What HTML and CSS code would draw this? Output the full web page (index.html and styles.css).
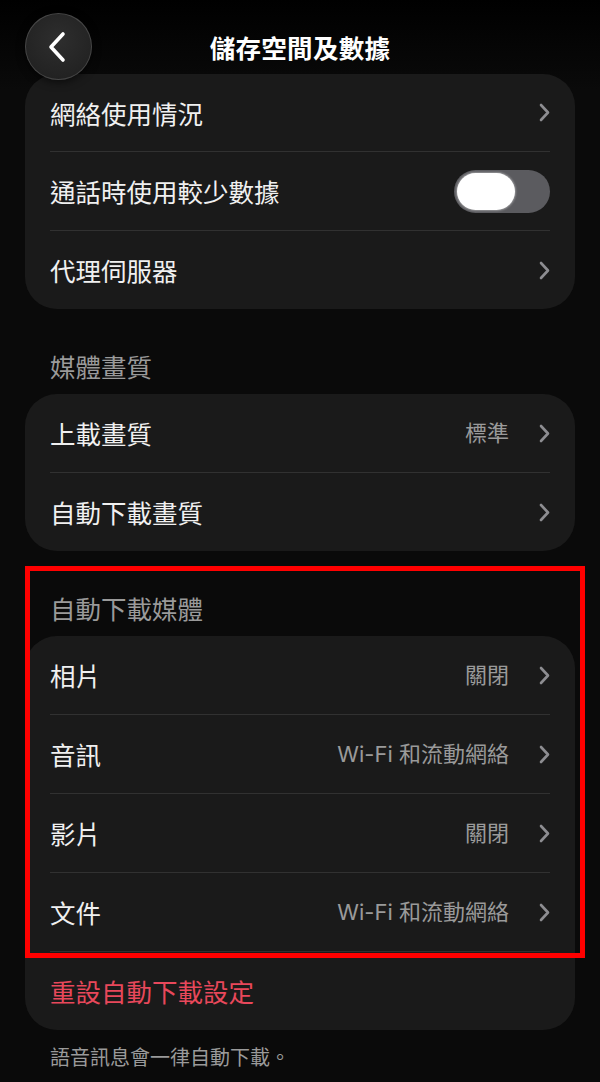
FILE: index.html
```html
<!DOCTYPE html>
<html lang="zh-Hant">
<head>
<meta charset="utf-8">
<title>儲存空間及數據</title>
<link rel="stylesheet" href="styles.css">
</head>
<body>
<div class="screen">
  <header class="topbar">
    <button class="back" aria-label="返回">
      <svg width="20" height="32" viewBox="0 0 20 32"><path d="M16 3 L4 16 L16 29" fill="none" stroke="#ffffff" stroke-width="3.6" stroke-linecap="round" stroke-linejoin="round"/></svg>
    </button>
    <h1 class="title">儲存空間及數據</h1>
    <div class="spacer"></div>
  </header>

  <section class="card first">
    <div class="row"><span class="label">網絡使用情況</span><span class="chev"><svg width="11" height="19" viewBox="0 0 11 19"><path d="M2 2 L9 9.5 L2 17" fill="none" stroke="#8d8d91" stroke-width="2.6" stroke-linecap="round" stroke-linejoin="round"/></svg></span></div>
    <div class="row"><span class="label">通話時使用較少數據</span><span class="toggle"><span class="knob"></span></span></div>
    <div class="row last"><span class="label">代理伺服器</span><span class="chev"><svg width="11" height="19" viewBox="0 0 11 19"><path d="M2 2 L9 9.5 L2 17" fill="none" stroke="#8d8d91" stroke-width="2.6" stroke-linecap="round" stroke-linejoin="round"/></svg></span></div>
  </section>

  <h2 class="section-title">媒體畫質</h2>
  <section class="card">
    <div class="row"><span class="label">上載畫質</span><span class="value">標準</span><span class="chev"><svg width="11" height="19" viewBox="0 0 11 19"><path d="M2 2 L9 9.5 L2 17" fill="none" stroke="#8d8d91" stroke-width="2.6" stroke-linecap="round" stroke-linejoin="round"/></svg></span></div>
    <div class="row last"><span class="label">自動下載畫質</span><span class="chev"><svg width="11" height="19" viewBox="0 0 11 19"><path d="M2 2 L9 9.5 L2 17" fill="none" stroke="#8d8d91" stroke-width="2.6" stroke-linecap="round" stroke-linejoin="round"/></svg></span></div>
  </section>

  <div class="highlight-wrap">
    <div class="highlight"></div>
    <h2 class="section-title">自動下載媒體</h2>
    <section class="card">
      <div class="row"><span class="label">相片</span><span class="value">關閉</span><span class="chev"><svg width="11" height="19" viewBox="0 0 11 19"><path d="M2 2 L9 9.5 L2 17" fill="none" stroke="#8d8d91" stroke-width="2.6" stroke-linecap="round" stroke-linejoin="round"/></svg></span></div>
      <div class="row"><span class="label">音訊</span><span class="value">Wi-Fi 和流動網絡</span><span class="chev"><svg width="11" height="19" viewBox="0 0 11 19"><path d="M2 2 L9 9.5 L2 17" fill="none" stroke="#8d8d91" stroke-width="2.6" stroke-linecap="round" stroke-linejoin="round"/></svg></span></div>
      <div class="row"><span class="label">影片</span><span class="value">關閉</span><span class="chev"><svg width="11" height="19" viewBox="0 0 11 19"><path d="M2 2 L9 9.5 L2 17" fill="none" stroke="#8d8d91" stroke-width="2.6" stroke-linecap="round" stroke-linejoin="round"/></svg></span></div>
      <div class="row"><span class="label">文件</span><span class="value">Wi-Fi 和流動網絡</span><span class="chev"><svg width="11" height="19" viewBox="0 0 11 19"><path d="M2 2 L9 9.5 L2 17" fill="none" stroke="#8d8d91" stroke-width="2.6" stroke-linecap="round" stroke-linejoin="round"/></svg></span></div>
      <div class="row last"><span class="label danger">重設自動下載設定</span></div>
    </section>
  </div>

  <p class="footnote">語音訊息會一律自動下載。</p>
</div>
</body>
</html>
```

FILE: styles.css
```css
* { box-sizing: border-box; }

html, body {
  margin: 0;
  padding: 0;
  background: #0a0a0a;
}

body {
  font-family: "Noto Sans CJK TC", "Noto Sans", sans-serif;
  color: #f2f2f2;
  width: 600px;
  height: 1082px;
  overflow: hidden;
}

.screen {
  background: linear-gradient(#000000 0px, #0a0a0a 90px, #0a0a0a 100%);
  min-height: 1082px;
}

.topbar {
  height: 74px;
  padding: 13px 25px 0 25px;
  display: grid;
  grid-template-columns: 67px 1fr 67px;
  align-items: start;
}

.back {
  position: relative;
  z-index: 2;
  width: 67px;
  height: 67px;
  border-radius: 50%;
  border: 1.5px solid rgba(255, 255, 255, 0.16);
  background: radial-gradient(circle at 50% 40%, #2e2e2e 0%, #232323 70%, #1c1c1c 100%);
  box-shadow: 0 2px 8px rgba(0, 0, 0, 0.6);
  display: flex;
  align-items: center;
  justify-content: center;
  padding: 0 3px 0 0;
}

.back svg { display: block; }

.title {
  margin: 0;
  text-align: center;
  font-size: 25.5px;
  font-weight: 700;
  line-height: 67px;
  color: #ffffff;
  letter-spacing: 0.3px;
}

.card {
  margin: 0 25px;
  background: #1a1a1a;
  border-radius: 32px;
}

.row {
  margin: 0 25px;
  height: 79px;
  display: flex;
  align-items: center;
  border-bottom: 1px solid #313131;
}

.row.last {
  height: 78px;
  border-bottom: none;
}

.first .row:first-child { height: 78px; }

.label {
  flex: 1;
  font-size: 25.5px;
  line-height: 1;
  color: #f0f0f0;
}

.label.danger {
  color: #e8485b;
}

.value {
  font-family: "Inter", "Noto Sans CJK TC", sans-serif;
  font-size: 22px;
  line-height: 1;
  color: #9a9a9a;
  margin-right: 30px;
}

.chev {
  width: 11px;
  height: 19px;
  display: flex;
}

.chev svg { display: block; }

.toggle {
  width: 96px;
  height: 43px;
  border-radius: 22px;
  background: #5b5b5f;
  padding: 3px;
  display: flex;
  align-items: center;
}

.knob {
  width: 58px;
  height: 37px;
  border-radius: 19px;
  background: #ffffff;
  box-shadow: 0 0 2px 1px rgba(255, 255, 255, 0.35);
}

.section-title {
  margin: 0;
  padding: 28px 50px 0 50px;
  height: 85px;
  display: flex;
  align-items: center;
  font-size: 25.5px;
  font-weight: 400;
  color: #9a9a9a;
}

.highlight-wrap {
  position: relative;
}

.highlight {
  position: absolute;
  left: 25px;
  top: 15px;
  width: 560px;
  height: 392px;
  border: 5px solid #ff0000;
  z-index: 3;
  pointer-events: none;
}

.footnote {
  margin: 0;
  padding: 13px 50px 0 50px;
  font-size: 20px;
  line-height: 28px;
  color: #9a9a9a;
}
```
